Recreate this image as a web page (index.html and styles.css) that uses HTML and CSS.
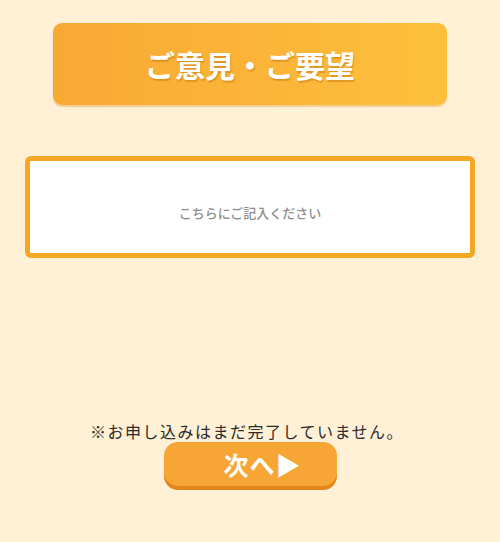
FILE: index.html
```html
<!DOCTYPE html>
<html lang="ja">
<head>
<meta charset="utf-8">
<title>ご意見・ご要望</title>
<link rel="stylesheet" href="styles.css">
</head>
<body>
<main class="page">
  <h1 class="title">ご意見・ご要望</h1>
  <textarea class="opinion" placeholder="こちらにご記入ください"></textarea>
  <div class="footer">
    <p class="notice">※お申し込みはまだ完了していません。</p>
    <button class="next" type="button">次へ▶</button>
  </div>
</main>
</body>
</html>
```

FILE: styles.css
```css
html, body {
  margin: 0;
  padding: 0;
  background: #fff0d6;
}
body {
  font-family: "Noto Sans CJK JP", "Noto Sans", sans-serif;
  width: 500px;
  height: 542px;
  overflow: hidden;
}
.page {
  display: flex;
  flex-direction: column;
  align-items: center;
}
.title {
  box-sizing: border-box;
  width: 394px;
  height: 82px;
  margin: 23px 0 0;
  border-radius: 9px;
  background: linear-gradient(90deg, #f8a934 0%, #fbb538 55%, #fec03c 100%);
  box-shadow: 0 2px 1px rgba(214, 140, 20, 0.35);
  color: #fff;
  font-size: 30px;
  font-weight: 700;
  line-height: 82px;
  text-align: center;
  text-shadow: 1px 2px 1px rgba(190, 110, 10, 0.45);
}
.opinion {
  box-sizing: border-box;
  display: block;
  width: 450px;
  height: 102px;
  margin-top: 51px;
  border: 5px solid #f5a623;
  border-radius: 6px;
  background: #fff;
  padding: 43px 10px 0;
  font-family: inherit;
  font-size: 13px;
  font-weight: 500;
  line-height: 18px;
  text-align: center;
  resize: none;
  outline: none;
}
.opinion::placeholder {
  color: #8f8f8f;
}
.footer {
  margin-top: 161px;
  display: flex;
  flex-direction: column;
  align-items: center;
}
.notice {
  margin: 0;
  font-size: 16px;
  letter-spacing: 1.5px;
  line-height: 24px;
  color: #2b2b2b;
  padding-right: 6px;
}
.next {
  box-sizing: border-box;
  width: 173px;
  height: 44px;
  margin-top: -1px;
  margin-left: 1px;
  border: none;
  border-radius: 14px;
  background: #f7a636;
  box-shadow: 0 4px 0 #e2861b;
  color: #fff;
  font-family: inherit;
  font-size: 25px;
  font-weight: 700;
  line-height: 44px;
  padding: 0 0 0 24px;
  letter-spacing: 1px;
}
```
